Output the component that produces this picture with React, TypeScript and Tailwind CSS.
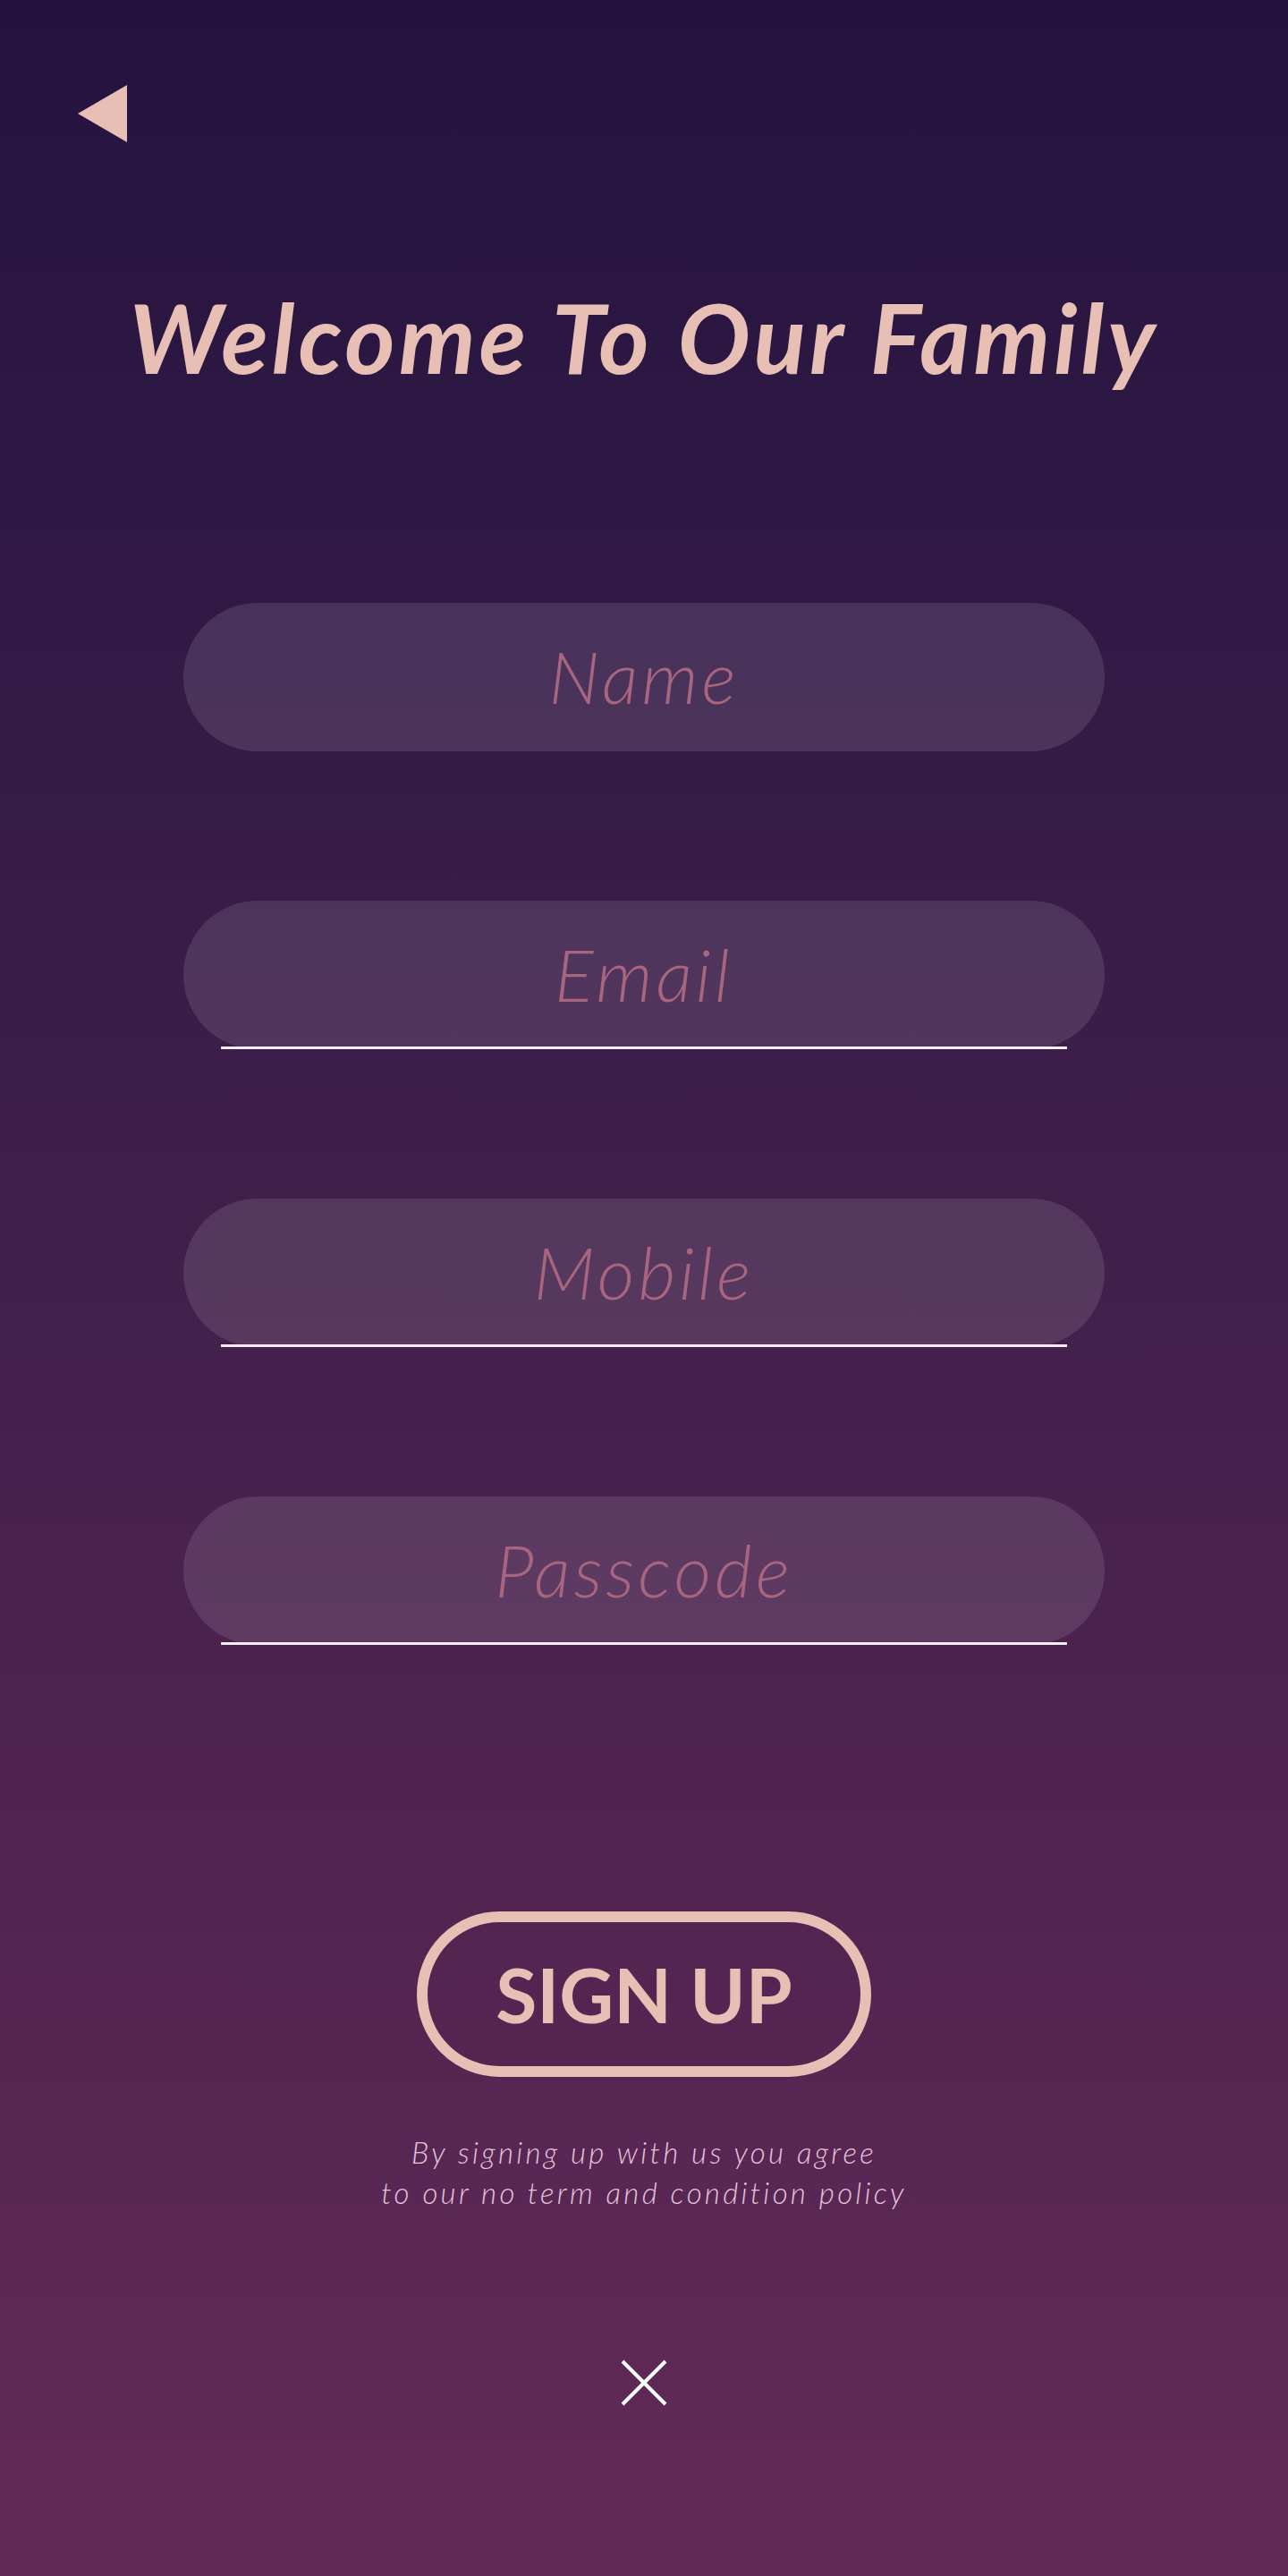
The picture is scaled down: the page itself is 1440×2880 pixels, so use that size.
import React from 'react';

const fields = ['Name', 'Email', 'Mobile', 'Passcode'];

const Field: React.FC<{ label: string; underline: boolean }> = ({ label, underline }) => (
  <div className="w-[1030px] h-[166px] rounded-full bg-white/[0.11] flex flex-col">
    <div className="flex-1 flex items-center justify-center">
      <span className="font-['Lato',sans-serif] italic font-light text-[81px] leading-none tracking-[4px] text-[#a8657f]">
        {label}
      </span>
    </div>
    <div className={`mx-[42px] h-[3px] ${underline ? 'bg-[#f4eef6]' : 'bg-transparent'}`} />
  </div>
);

export default function App() {
  return (
    <div className="w-full h-[2880px] bg-gradient-to-b from-[#24133f] to-[#632a57] flex flex-col items-center font-['Lato',sans-serif]">
      {/* Back */}
      <div className="w-full pl-[87px] pt-[95px]">
        <button className="block">
          <svg width="55" height="64" viewBox="0 0 55 64">
            <polygon points="0,32 55,0 55,64" fill="#e8bfb4" />
          </svg>
        </button>
      </div>

      {/* Title */}
      <h1 className="mt-[163px] text-[108px] leading-none italic font-bold tracking-[4px] text-[#e8bfb4]">
        Welcome To Our Family
      </h1>

      {/* Form fields */}
      <div className="mt-[244px] flex flex-col gap-[167px]">
        {fields.map((f, i) => (
          <Field key={f} label={f} underline={i > 0} />
        ))}
      </div>

      {/* Sign up */}
      <button className="mt-[298px] w-[508px] h-[185px] rounded-full border-[12px] border-[#e8bfb4] flex items-center justify-center">
        <span className="text-[84px] leading-none font-bold text-[#e8bfb4]">SIGN UP</span>
      </button>

      <p className="mt-[62px] text-center italic font-light text-[33px] leading-[45px] tracking-[0.1em] text-[#e2c4da]">
        By signing up with us you agree
        <br />
        to our no term and condition policy
      </p>

      {/* Close */}
      <button className="mt-[164px]">
        <svg width="52" height="52" viewBox="0 0 52 52">
          <path d="M2 2 L50 50 M50 2 L2 50" stroke="#ffffff" strokeWidth="4" />
        </svg>
      </button>
    </div>
  );
}
